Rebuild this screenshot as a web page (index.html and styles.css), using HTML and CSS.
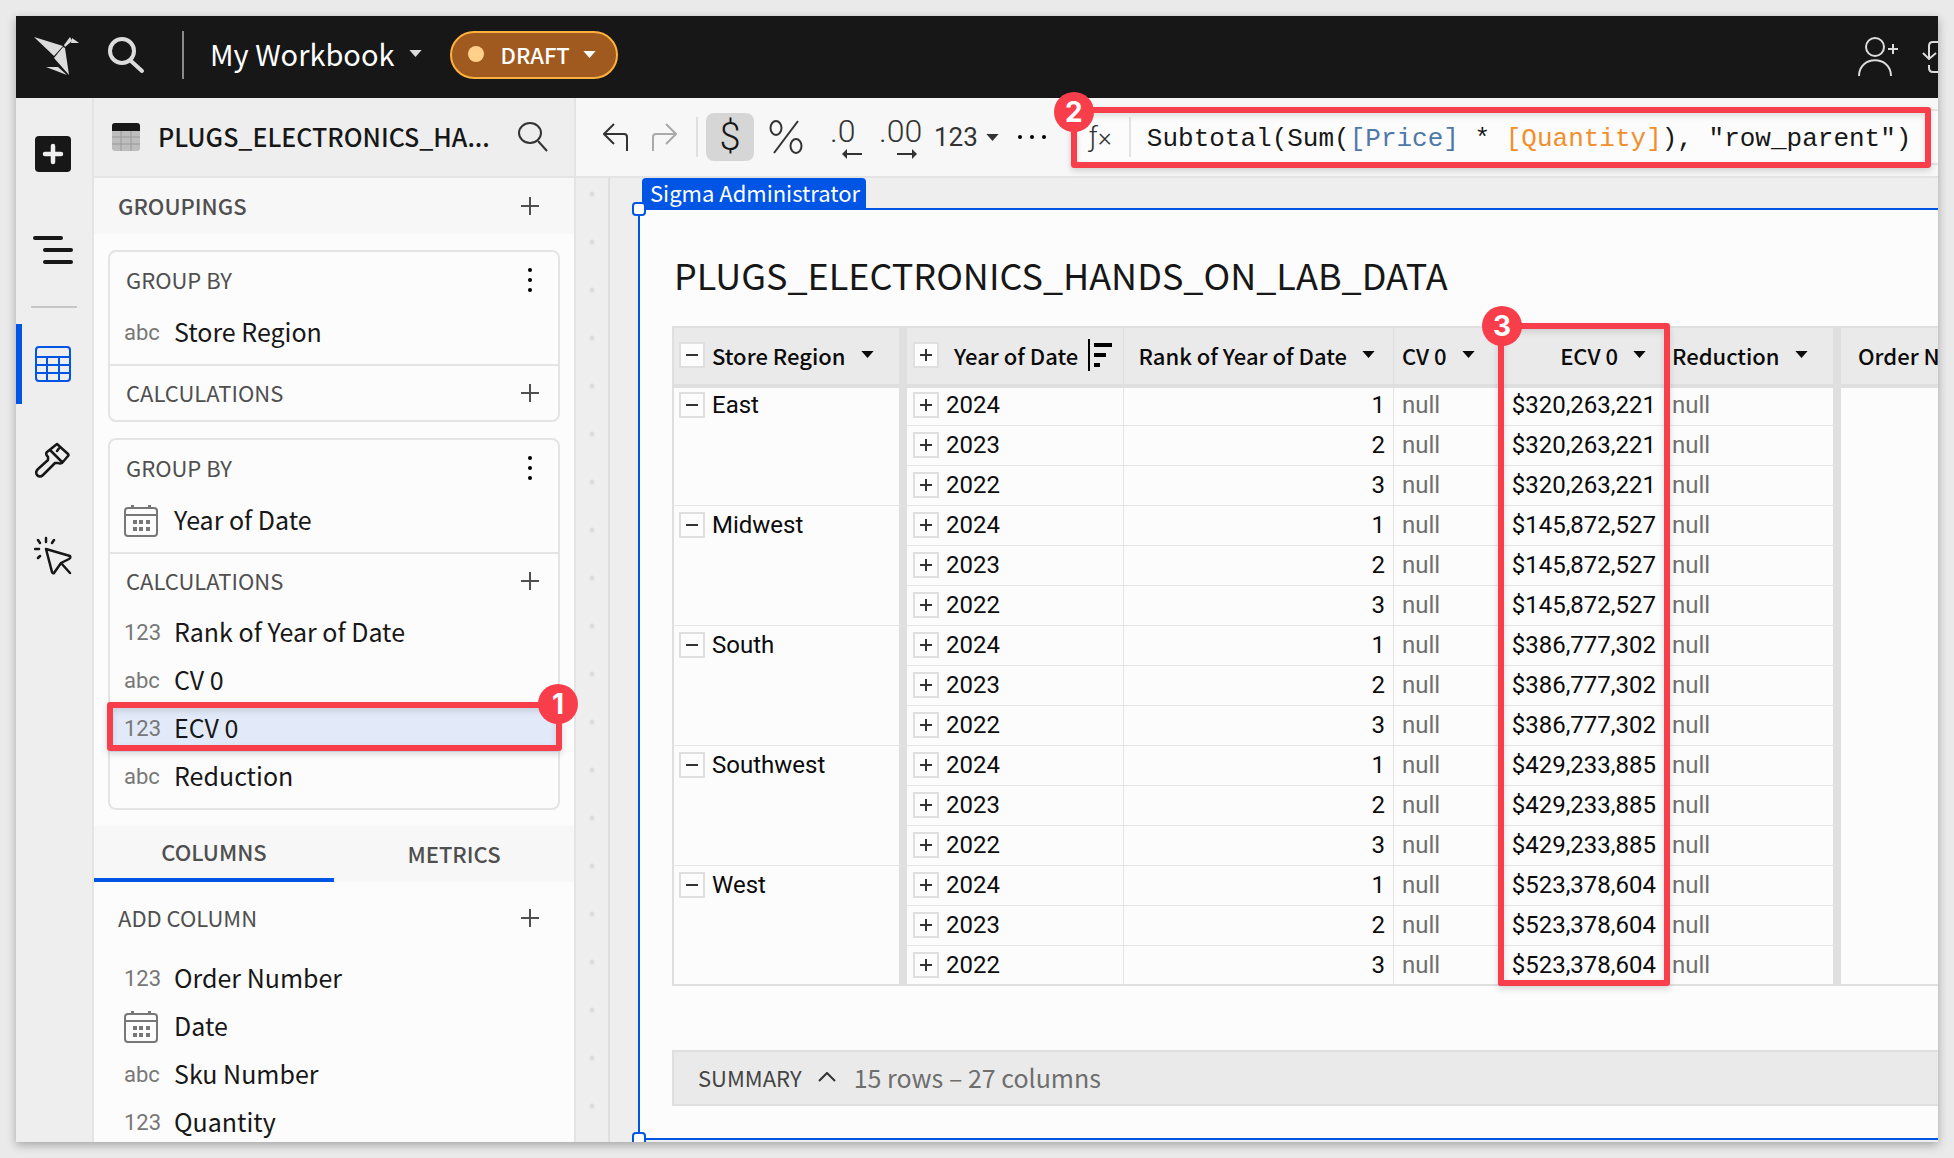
FILE: index.html
```html
<!DOCTYPE html>
<html lang="en">
<head>
<meta charset="utf-8">
<title>My Workbook</title>
<link rel="stylesheet" href="styles.css">
</head>
<body>
<svg class="sprite" aria-hidden="true">
  <symbol id="plus" viewBox="0 0 18 18"><path d="M9 0V18M0 9H18" fill="none" stroke="currentColor" stroke-width="2"/></symbol>
  <symbol id="caret" viewBox="0 0 14 8"><path d="M0 0H14L7 8Z" fill="currentColor"/></symbol>
  <symbol id="more" viewBox="0 0 4 24"><circle cx="2" cy="2" r="2"/><circle cx="2" cy="12" r="2"/><circle cx="2" cy="22" r="2"/></symbol>
  <symbol id="calendar" viewBox="0 0 34 32"><g fill="none" stroke="currentColor" stroke-width="2"><rect x="1" y="3" width="32" height="28" rx="3"/><path d="M1 10H33"/></g><path d="M7 0h3v3H7zM24 0h3v3h-3zM9 15h4v4H9zM15 15h4v4h-4zM22 15h4v4h-4zM9 22h4v4H9zM15 22h4v4h-4zM22 22h4v4h-4z" fill="currentColor"/></symbol>
</svg>

<div class="window">
  <header class="topbar">
    <a class="logo" href="#" aria-label="Home"><svg width="46" height="40" viewBox="0 0 46 40"><g fill="#dcdcdc"><path d="M0 0L29 9L20 19Z"/><path d="M30 8L36 0L38 4L31 10Z"/><path d="M38 1L45 6L37 6Z"/><path d="M31 11L35 38L20 21L29 10Z"/><path d="M12 30L24 30L33 38Z"/></g></svg></a>
    <button class="bare search" aria-label="Search"><svg width="37" height="37" viewBox="0 0 37 37" fill="none" stroke="#dcdcdc" stroke-width="4" stroke-linecap="round"><circle cx="14" cy="14" r="12"/><path d="M23 24L34 34"/></svg></button>
    <span class="topbar-rule"></span>
    <button class="bare workbook">My Workbook<svg width="13" height="7"><use href="#caret"/></svg></button>
    <button class="draft"><span class="draft-dot"></span>DRAFT<svg width="13" height="7"><use href="#caret"/></svg></button>
    <div class="topbar-end">
      <button class="bare" aria-label="Share"><svg width="42" height="40" viewBox="0 0 42 40" fill="none" stroke="#dcdcdc" stroke-width="2"><circle cx="17" cy="10" r="9"/><path d="M1 39C1 18 33 18 33 39M35 7V17M30 12H40"/></svg></button>
      <button class="bare refresh" aria-label="Refresh"><svg width="40" height="34" viewBox="0 0 40 34" fill="none" stroke="#dcdcdc" stroke-width="2"><path d="M7 18V6Q7 2 11 2H28Q32 2 32 6M1 13L7 19L14 13M7 25V28Q7 32 11 32H28"/></svg></button>
    </div>
  </header>

  <div class="body">
    <nav class="rail">
      <button class="rail-item" aria-label="Add element"><svg width="36" height="36" viewBox="0 0 36 36"><rect width="36" height="36" rx="4" fill="#171717"/><path d="M18 10V26M10 18H26" stroke="#eee" stroke-width="4.500" stroke-linecap="round"/></svg></button>
      <button class="rail-item" aria-label="Outline"><svg width="40" height="28" viewBox="0 0 40 28" stroke="#171717" stroke-width="4" stroke-linecap="round"><path d="M2 2H28M12 14H38M12 26H38"/></svg></button>
      <span class="rail-rule"></span>
      <button class="rail-item active" aria-label="Table"><svg width="36" height="36" viewBox="0 0 36 36" fill="none" stroke="#0055e5" stroke-width="2"><rect x="1" y="1" width="34" height="34" rx="3"/><path d="M1 11H35M1 19H35M1 27H35M12 11V35M24 11V35"/></svg></button>
      <button class="rail-item" aria-label="Format"><svg width="36" height="36" viewBox="0 0 36 36" fill="none" stroke="#171717" stroke-width="2.500" stroke-linejoin="round" stroke-linecap="round"><path d="M22 2L33 12Q34 13 33 14L27 21Q25 22 23 21L20 21L8 33Q5 36 2 33Q0 30 3 27L13 18V15Q10 12 12 10ZM15 8L27 20M25 5L22 9"/></svg></button>
      <button class="rail-item" aria-label="Actions"><svg width="38" height="40" viewBox="0 0 38 40" fill="none" stroke="#171717" stroke-width="2.500" stroke-linejoin="round" stroke-linecap="round"><path d="M12 13L36 20Q37 22 35 23L27 27L20 37Q19 38 18 36ZM27 27L36 37M12 2V6M4 4L6 7M20 4L18 7M1 13H5M4 22L6 20"/></svg></button>
    </nav>

    <aside class="sidebar">
      <div class="panel-head">
        <svg width="28" height="28" viewBox="0 0 28 28"><rect width="28" height="28" rx="3" fill="#bdbdbd"/><path d="M0 8V3Q0 0 3 0H25Q28 0 28 3V8Z" fill="#171717"/><path d="M0 14H28M0 21H28M9 8V28M19 8V28" stroke="#999" stroke-width="1"/></svg>
        <h2>PLUGS_ELECTRONICS_HA...</h2>
        <button class="bare" aria-label="Search columns"><svg width="30" height="30" viewBox="0 0 30 30" fill="none" stroke="#333" stroke-width="2"><ellipse cx="12" cy="11" rx="11" ry="10"/><path d="M20 19L29 29"/></svg></button>
      </div>
      <div class="section-head"><h3>GROUPINGS</h3><button class="bare" aria-label="Add grouping"><svg width="18" height="18"><use href="#plus"/></svg></button></div>

      <div class="groupings">
        <section class="card">
          <div class="card-head"><h4>GROUP BY</h4><button class="bare more" aria-label="More"><svg width="4" height="24"><use href="#more"/></svg></button></div>
          <ul class="fields inset"><li><span class="type">abc</span>Store Region</li></ul>
          <div class="card-head calc"><h4>CALCULATIONS</h4><button class="bare" aria-label="Add calculation"><svg width="18" height="18"><use href="#plus"/></svg></button></div>
        </section>
        <section class="card">
          <div class="card-head"><h4>GROUP BY</h4><button class="bare more" aria-label="More"><svg width="4" height="24"><use href="#more"/></svg></button></div>
          <ul class="fields inset"><li><span class="type"><svg width="34" height="32"><use href="#calendar"/></svg></span>Year of Date</li></ul>
          <div class="card-head calc"><h4>CALCULATIONS</h4><button class="bare" aria-label="Add calculation"><svg width="18" height="18"><use href="#plus"/></svg></button></div>
          <ul class="fields inset">
            <li><span class="type">123</span>Rank of Year of Date</li>
            <li><span class="type">abc</span>CV 0</li>
            <li class="selected"><span class="type">123</span>ECV 0<span class="callout callout-field"><b class="badge">1</b></span></li>
            <li><span class="type">abc</span>Reduction</li>
          </ul>
        </section>
      </div>

      <div class="tabs" role="tablist">
        <button role="tab" aria-selected="true" class="tab tab-on">COLUMNS</button>
        <button role="tab" aria-selected="false" class="tab">METRICS</button>
      </div>
      <div class="add-column"><h4>ADD COLUMN</h4><button class="bare" aria-label="Add column"><svg width="18" height="18"><use href="#plus"/></svg></button></div>
      <ul class="fields all">
        <li><span class="type">123</span>Order Number</li>
        <li><span class="type"><svg width="34" height="32"><use href="#calendar"/></svg></span>Date</li>
        <li><span class="type">abc</span>Sku Number</li>
        <li><span class="type">123</span>Quantity</li>
      </ul>
    </aside>

    <main class="main">
      <div class="toolbar">
        <button class="bare undo" aria-label="Undo"><svg width="26" height="28" viewBox="0 0 26 28" fill="none" stroke="#333" stroke-width="2"><path d="M11 1L1 11L11 21M1 11H21Q24 11 24 14V28"/></svg></button>
        <button class="bare redo" aria-label="Redo"><svg width="26" height="28" viewBox="0 0 26 28" fill="none" stroke="#aaa" stroke-width="2"><path d="M15 1L25 11L15 21M25 11H5Q2 11 2 14V28"/></svg></button>
        <span class="tool-rule"></span>
        <button class="tool currency" aria-label="Currency">$</button>
        <button class="tool percent" aria-label="Percent"><svg width="34" height="34" viewBox="0 0 34 34" fill="none" stroke="#333" stroke-width="2"><ellipse cx="7" cy="8" rx="5.500" ry="7"/><ellipse cx="27" cy="26" rx="5.500" ry="7"/><path d="M29 1L5 33"/></svg></button>
        <button class="tool decimals" aria-label="Fewer decimals">.0<svg width="20" height="10" viewBox="0 0 20 10"><path d="M0 5L5 0V10Z" fill="#333"/><path d="M4 5H20" stroke="#333" stroke-width="2"/></svg></button>
        <button class="tool decimals" aria-label="More decimals">.00<svg width="20" height="10" viewBox="0 0 20 10"><path d="M20 5L15 0V10Z" fill="#333"/><path d="M0 5H16" stroke="#333" stroke-width="2"/></svg></button>
        <button class="tool number">123<svg width="13" height="7"><use href="#caret"/></svg></button>
        <button class="tool dots" aria-label="More formats"><svg width="28" height="4" viewBox="0 0 28 4"><circle cx="2" cy="2" r="2"/><circle cx="14" cy="2" r="2"/><circle cx="26" cy="2" r="2"/></svg></button>
        <div class="formula">
          <span class="fx">ƒ<small>×</small></span>
          <div class="formula-text" role="textbox" aria-label="Formula" contenteditable="true" spellcheck="false">Subtotal(Sum(<span class="ref-a">[Price]</span> * <span class="ref-b">[Quantity]</span>), "row_parent")</div>
          <span class="callout callout-formula"><b class="badge">2</b></span>
        </div>
      </div>

      <div class="canvas">
        <div class="gutter"></div>
        <div class="stage">
          <article class="frame">
            <span class="owner">Sigma Administrator</span>
            <i class="handle handle-top"></i><i class="handle handle-bottom"></i>
            <h1>PLUGS_ELECTRONICS_HANDS_ON_LAB_DATA</h1>
            <div class="grid">
              <table>
                <colgroup><col class="c-region"><col class="c-year"><col class="c-rank"><col class="c-cv"><col class="c-ecv"><col class="c-red"><col></colgroup>
                <thead>
                  <tr>
                    <th class="region"><div class="cell"><button class="toggle minus" aria-label="Collapse"></button>Store Region<svg width="13" height="7"><use href="#caret"/></svg></div></th>
                    <th class="year"><div class="cell"><button class="toggle" aria-label="Expand"></button><span class="year-name">Year of Date</span><svg class="sort" width="24" height="32" viewBox="0 0 24 32"><path d="M0 0h2v32H0zM6 4h18v4H6zM6 14h12v4H6zM6 24h6v4H6z"/></svg></div></th>
                    <th class="rank"><div class="cell end">Rank of Year of Date<svg width="13" height="7"><use href="#caret"/></svg></div></th>
                    <th class="cv"><div class="cell">CV 0<svg width="13" height="7"><use href="#caret"/></svg></div></th>
                    <th class="ecv"><div class="cell end">ECV 0<svg width="13" height="7"><use href="#caret"/></svg></div></th>
                    <th class="red"><div class="cell">Reduction<svg width="13" height="7"><use href="#caret"/></svg></div></th>
                    <th class="order"><div class="cell">Order Number</div></th>
                  </tr>
                </thead>
                <tbody id="rows"></tbody>
              </table>
              <span class="callout callout-column"><b class="badge">3</b></span>
            </div>
            <footer class="summary"><button class="bare">SUMMARY<svg width="18" height="10" viewBox="0 0 18 10" fill="none" stroke="#333" stroke-width="2"><path d="M1 9L9 1L17 9"/></svg></button><span class="count">15 rows – 27 columns</span></footer>
          </article>
        </div>
      </div>
    </main>
  </div>
</div>
<script src="table.js"></script>
</body>
</html>
```
FILE: styles.css
```css
* { box-sizing: border-box; }
body { margin: 0; height: 100vh; padding: 16px; background: #eaeaea; color: #171717; font-family: "Noto Sans CJK SC", sans-serif; font-size: 25px; }
h1, h2, h3, h4, ul { margin: 0; padding: 0; }
h2, h3 { font-weight: 500; }
h4 { font-weight: 400; }
ul { list-style: none; }
svg { flex: none; display: block; }
button { font: inherit; color: inherit; border: 0; padding: 0; margin: 0; background: none; }
.bare { display: flex; align-items: center; flex: none; }
.sprite { position: absolute; width: 0; height: 0; }

.window { height: 100%; display: flex; flex-direction: column; overflow: hidden; background: #eee; box-shadow: 0 3px 9px rgba(0, 0, 0, .3); }

/* Top bar */
.topbar { flex: none; height: 82px; display: flex; align-items: center; padding: 0 0 4px 18px; background: #171717; color: #fff; overflow: hidden; }
.logo { padding-top: 4px; }
.search { margin-left: 28px; }
.topbar-rule { width: 2px; height: 48px; margin-left: 37px; background: #8a8a8a; }
.workbook { margin-left: 26px; padding-bottom: 4px; gap: 14px; font-size: 29px; line-height: 48px; }
.workbook svg { color: #dcdcdc; }
.draft { height: 48px; width: 168px; margin-left: 28px; padding: 0 0 2px 16px; display: flex; align-items: center; border: 2px solid #ffb13d; border-radius: 24px; background: #a0591e; font-size: 22px; line-height: 40px; font-weight: 500; }
.draft-dot { width: 16px; height: 16px; margin-right: 17px; border-radius: 50%; background: #ffd08a; }
.draft svg { margin-left: 13px; }
.topbar-end { margin-left: auto; padding-top: 4px; display: flex; align-items: center; gap: 22px; }
.refresh { width: 16px; overflow: hidden; }

.body { flex: 1; min-height: 0; display: flex; }

/* Rail */
.rail { flex: none; width: 78px; padding-top: 16px; display: flex; flex-direction: column; gap: 16px; align-items: center; border-right: 2px solid #e4e4e4; }
.rail-item { width: 100%; height: 80px; padding-right: 2px; flex: none; display: flex; align-items: center; justify-content: center; }
.rail-item.active { box-shadow: inset 6px 0 #0055e5; }
.rail-rule { width: 46px; height: 2px; background: #c6c6c6; }

/* Sidebar */
.sidebar { position: relative; z-index: 1; flex: none; width: 482px; border-right: 2px solid #e4e4e4; background: #fcfcfc; }
.panel-head { height: 80px; display: flex; align-items: center; gap: 18px; padding: 0 26px 0 18px; border-bottom: 2px solid #e4e4e4; background: #eee; }
.panel-head h2 { flex: 1; padding-bottom: 3px; white-space: nowrap; font-size: 25px; line-height: 40px; }
.section-head, .add-column { display: flex; align-items: center; justify-content: space-between; padding: 0 35px 0 24px; color: #4f4f4f; line-height: 32px; }
.section-head { height: 56px; background: #f7f7f7; }
.section-head h3, .add-column h4, .card-head h4 { padding-bottom: 3px; font-size: 22px; }
.add-column { height: 72px; }
.groupings { padding: 16px 14px; display: flex; flex-direction: column; gap: 16px; }
.card { border: 2px solid #e4e4e4; border-radius: 8px; }
.card-head { height: 56px; display: flex; align-items: center; justify-content: space-between; padding: 0 19px 0 16px; color: #4f4f4f; line-height: 32px; }
.card-head .more { width: 18px; justify-content: center; }
.calc { height: 56px; border-top: 2px solid #e4e4e4; }
.fields li { position: relative; height: 48px; padding-bottom: 3px; display: flex; align-items: center; line-height: 40px; white-space: nowrap; }
.fields.inset { padding-bottom: 8px; }
.fields.inset li { padding-left: 14px; }
.fields.all li { padding-left: 30px; }
.type { width: 50px; flex: none; padding-top: 4px; color: #777; font-family: Roboto, sans-serif; font-size: 22px; }
.selected { background: #e2eaf9; }
.tabs { height: 56px; display: flex; background: #f7f7f7; color: #4f4f4f; }
.tab { flex: 1; padding-bottom: 3px; font-size: 22px; line-height: 32px; font-weight: 500; }
.tab-on { border-bottom: 4px solid #0055e5; }

/* Numbered callouts */
.callout { position: absolute; z-index: 2; border: 6px solid #f83e4b; border-radius: 3px; box-shadow: 0 3px 6px rgba(0, 0, 0, .15), inset 0 3px 6px rgba(0, 0, 0, .12); pointer-events: none; }
.badge { position: absolute; width: 40px; height: 40px; border-radius: 50%; background: #f83e4b; color: #fff; font: 700 28px/40px Inter, sans-serif; text-align: center; }
.callout-field { inset: -2px -4px 1px -3px; }
.callout-field .badge { right: -22px; top: -24px; }
.callout-formula { inset: -4px 7px -5px 0; }
.callout-formula .badge { left: -23px; top: -21px; }
.callout-column { left: 826px; width: 172px; top: -3px; bottom: 0; }
.callout-column .badge { left: -22px; top: -23px; }

/* Toolbar */
.main { flex: 1; min-width: 0; display: flex; flex-direction: column; }
.toolbar { flex: none; height: 80px; padding-left: 27px; display: flex; align-items: center; border-bottom: 2px solid #e4e4e4; background: #f7f7f7; color: #333; font-family: Roboto, sans-serif; }
.redo { margin-left: 22px; }
.tool-rule { width: 2px; height: 40px; margin: 0 8px 0 19px; background: #e0e0e0; }
.tool { flex: none; height: 48px; display: flex; align-items: center; justify-content: center; border-radius: 8px; }
.currency { width: 48px; background: #d6d6d6; color: #171717; font-size: 38px; font-weight: 300; }
.percent { width: 64px; }
.decimals { width: 32px; margin-left: 12px; flex-direction: column; align-items: flex-start; justify-content: flex-start; font-size: 32px; line-height: 36px; font-weight: 300; }
.decimals svg { align-self: flex-end; }
.decimals + .decimals { width: 38px; margin-left: 17px; }
.number { margin-left: 17px; gap: 8px; font-size: 26px; }
.dots { width: 66px; }
.formula { position: relative; flex: 1; min-width: 0; height: 56px; margin-left: 6px; padding-left: 18px; display: flex; align-items: center; border: solid #e4e4e4; border-width: 2px 0; background: #fcfcfc; }
.fx { flex: none; width: 42px; height: 40px; border-right: 2px solid #e4e4e4; font-size: 28px; line-height: 40px; font-weight: 300; white-space: nowrap; }
.fx small { font-size: 26px; }
.formula-text { padding: 4px 0 0 16px; font: 26px/40px "Liberation Mono", monospace; color: #171717; white-space: pre; outline: 0; }
.ref-a { color: #4e79a7; }
.ref-b { color: #f28e2b; }

/* Canvas */
.canvas { flex: 1; min-height: 0; display: flex; overflow: hidden; background: #eee; }
.gutter { flex: none; width: 34px; border-right: 2px solid #dedede; background: radial-gradient(circle, #dcdcdc 2px, transparent 3px) 0 -8px / 32px 48px; }
.stage { flex: 1; min-width: 0; padding: 30px 0 2px 28px; }
.frame { position: relative; padding: 0 0 32px 32px; border: solid #0055e5; border-width: 2px 0 2px 2px; background: #fcfcfc; }
.owner { position: absolute; left: 2px; top: -32px; padding: 0 6px 0 8px; height: 32px; border-radius: 4px 4px 0 0; background: #0055e5; color: #fff; font-size: 22px; line-height: 29px; white-space: nowrap; }
.handle { position: absolute; left: -8px; width: 14px; height: 14px; border: 2px solid #0055e5; border-radius: 4px; background: #fff; }
.handle-top { top: -8px; }
.handle-bottom { bottom: -8px; }
h1 { padding: 38px 0 26px 2px; font-size: 36px; line-height: 52px; font-weight: 400; }

/* Data table */
.grid { position: relative; margin-bottom: 64px; }
table { width: 100%; table-layout: fixed; border-collapse: separate; border-spacing: 0; color: #0b0b0b; }
.c-region { width: 235px; }
.c-year { width: 217px; }
.c-rank { width: 270px; }
.c-cv { width: 106px; }
.c-ecv { width: 166px; }
.c-red { width: 175px; }
th, td { padding: 0; overflow: hidden; white-space: nowrap; text-align: left; vertical-align: top; }
th { height: 62px; border-top: 2px solid #dfdfdf; border-bottom: 4px solid #dfdfdf; border-right: 1px solid #dfdfdf; background: #eaeaea; font-size: 22px; line-height: 32px; font-weight: 500; }
td { height: 40px; border-bottom: 1px solid #e4e4e4; border-right: 1px solid #e4e4e4; font: 24px/34px Roboto, sans-serif; }
tbody tr:first-child td { height: 38px; }
tbody tr:first-child .cell { height: 34px; }
tbody tr:last-child td, tbody td.last { border-bottom: 2px solid #dfdfdf; }
.cell { display: flex; align-items: center; height: 38px; }
th .cell { height: 56px; padding-bottom: 3px; }
th .cell > svg { margin-left: 15px; }
.end { justify-content: flex-end; }
.region { border-left: 2px solid #dfdfdf; }
th.region, td.region, th.red, td.red { border-right: 8px solid #dfdfdf; }
.region .cell { padding-left: 5px; gap: 7px; }
th.region .cell > svg { margin-left: 8px; }
.year .cell { padding-left: 6px; gap: 7px; }
.year-name { padding-left: 8px; }
th.year .cell > .sort { margin-left: 3px; }
th.rank .cell, th.ecv .cell { padding-right: 18px; }
td.rank .cell, td.ecv .cell { padding-right: 8px; }
.cv .cell { padding-left: 8px; }
th.cv, td.cv, th.ecv, td.ecv { border-right: 2px solid #0055e5; }
.red .cell { padding-left: 6px; }
.order .cell { padding-left: 17px; }
th.order, td.order { border-right: 0; }
tbody .order:not(.last) { border-bottom-color: transparent; }
td.cv, td.red { color: #6e6e6e; }
tbody tr:last-child td.ecv { border-bottom-color: #0055e5; }
.toggle { flex: none; width: 26px; height: 26px; border: 2px solid #dfdfdf; background: linear-gradient(#333, #333) center / 12px 2px no-repeat, linear-gradient(#333, #333) center / 2px 12px no-repeat, #fcfcfc; }
.toggle.minus { background: linear-gradient(#333, #333) center / 12px 2px no-repeat, #fcfcfc; }

.summary { height: 56px; display: flex; align-items: center; gap: 18px; padding: 0 0 3px 24px; border: solid #dfdfdf; border-width: 2px 0 2px 2px; background: #eaeaea; line-height: 40px; }
.summary button { gap: 16px; font-size: 22px; color: #444; }
.count { color: #6e6e6e; font-size: 25px; }
```
FILE: table.js
```js
const regions = [
  ["East", "$320,263,221"],
  ["Midwest", "$145,872,527"],
  ["South", "$386,777,302"],
  ["Southwest", "$429,233,885"],
  ["West", "$523,378,604"]
];
const years = [2024, 2023, 2022];

document.getElementById("rows").innerHTML = regions.map(([name, total], r) =>
  years.map((year, i) => {
    const lastRegion = r === regions.length - 1;
    const first = i === 0
      ? `<td class="region${lastRegion ? " last" : ""}" rowspan="3"><div class="cell"><button class="toggle minus" aria-label="Collapse"></button>${name}</div></td>`
      : "";
    return `<tr>${first}
      <td class="year"><div class="cell"><button class="toggle" aria-label="Expand"></button>${year}</div></td>
      <td class="rank"><div class="cell end">${i + 1}</div></td>
      <td class="cv"><div class="cell">null</div></td>
      <td class="ecv"><div class="cell end">${total}</div></td>
      <td class="red"><div class="cell">null</div></td>
      <td class="order${lastRegion && i === 2 ? " last" : ""}"></td></tr>`;
  }).join("")
).join("");
```
